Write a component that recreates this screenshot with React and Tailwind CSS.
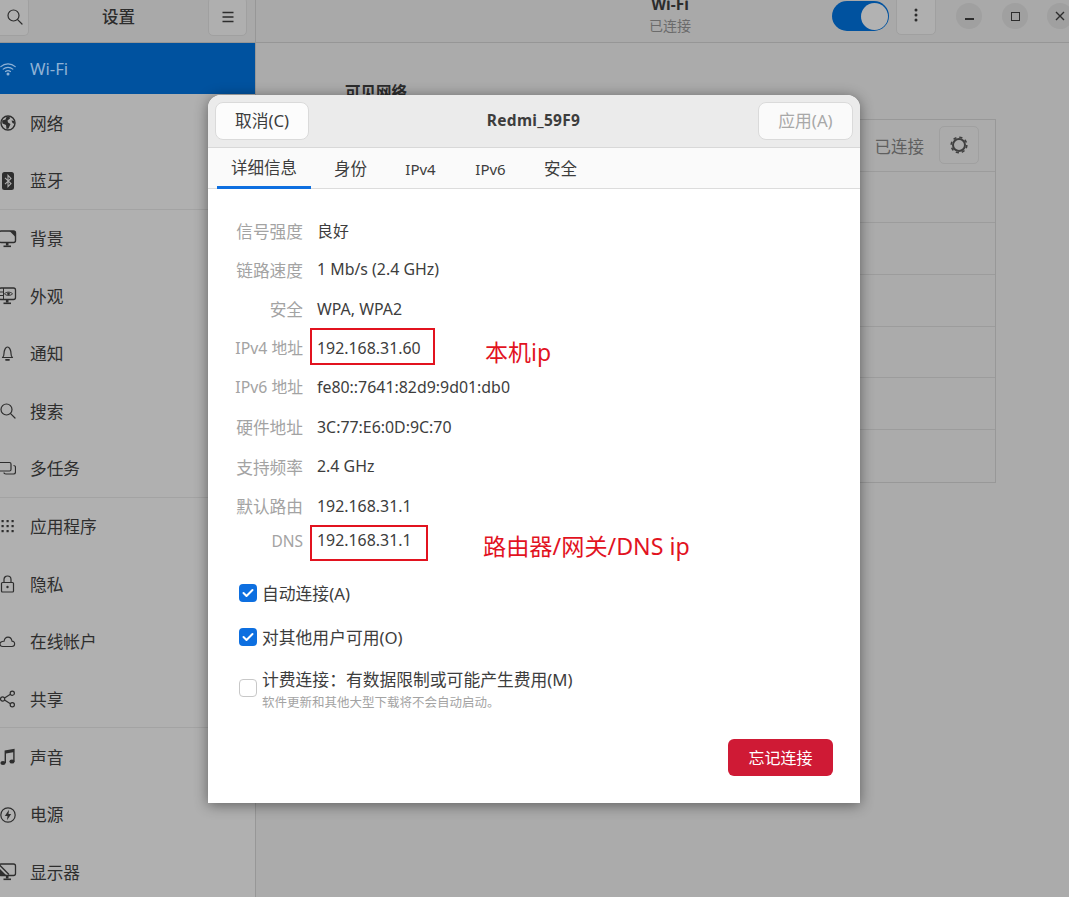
const cjk = "font-['Noto_Sans','Noto_Sans_CJK_SC',sans-serif]";

const Wifi = () => (
  <svg width="16" height="16" viewBox="0 0 16 16" fill="none" stroke="currentColor" strokeWidth="1.2" strokeLinecap="round">
    <path d="M0.8 5.6C4.8 1.9 11.2 1.9 15.2 5.6" />
    <path d="M3.2 8.1C5.9 5.7 10.1 5.7 12.8 8.1" />
    <path d="M5.5 10.5C6.9 9.4 9.1 9.4 10.5 10.5" />
    <circle cx="8" cy="13" r="1.5" fill="currentColor" stroke="none" />
  </svg>
);
const Globe = () => (
  <svg width="16" height="16" viewBox="0 0 16 16" fill="none">
    <circle cx="8" cy="8" r="7" stroke="currentColor" strokeWidth="1.4" />
    <path d="M2 5.5L5.5 4.5L6.5 2L9.5 1.5L10 3.5L7.5 5.5L8 7.5L10.5 9L8.5 13.5L6.5 14L6 10L2.5 8.5Z" fill="currentColor" />
    <path d="M11.5 5.5L14.5 6L14.5 9L12.5 8Z" fill="currentColor" />
  </svg>
);
const Bluetooth = () => (
  <svg width="16" height="18" viewBox="0 0 16 18">
    <rect x="2" y="0" width="12" height="18" rx="2.5" fill="currentColor" />
    <path d="M5 5.8L11 11.6L8 14.6V3.4L11 6.4L5 12.2" fill="none" stroke="#b0b0b0" strokeWidth="1.1" />
  </svg>
);
const Background = () => (
  <svg width="16" height="18" viewBox="0 0 16 18" fill="none" stroke="currentColor" strokeWidth="1.4" className="overflow-visible">
    <rect x="-1" y="1" width="16.5" height="11.5" rx="2" />
    <path d="M9.5 1L15.5 7V3Q15.5 1 13.5 1Z" fill="currentColor" stroke="none" />
    <path d="M7.2 13V15.5" strokeWidth="2.6" />
    <path d="M3.5 16.3H11" strokeWidth="1.6" />
  </svg>
);
const Appearance = () => (
  <svg width="16" height="18" viewBox="0 0 16 18" fill="none" stroke="currentColor" strokeWidth="1.3" className="overflow-visible">
    <rect x="-1" y="1" width="16.5" height="11.5" rx="2" />
    <path d="M3.5 1V12.5" strokeWidth="1" />
    <path d="M-1 5H3.5M-1 8.5H3.5" strokeWidth="1" />
    <path d="M4.5 6.8C6.5 4.6 10.5 4.6 12.5 6.8C10.5 9 6.5 9 4.5 6.8Z" strokeWidth="1" />
    <circle cx="8.5" cy="6.8" r="1.4" fill="currentColor" stroke="none" />
    <path d="M7.2 13V15.5" strokeWidth="2.6" />
    <path d="M3.5 16.3H11" strokeWidth="1.6" />
  </svg>
);
const Bell = () => (
  <svg width="16" height="16" viewBox="0 0 16 16" fill="none" stroke="currentColor" strokeWidth="1.2">
    <path d="M2.5 11.5C3.8 10.6 4 9.5 4 7.5C4 4.5 5.5 1 7.5 1C9.5 1 11 4.5 11 7.5C11 9.5 11.2 10.6 12.5 11.5Z" strokeLinejoin="round" />
    <path d="M6 13.8H9" strokeWidth="1.8" strokeLinecap="round" />
  </svg>
);
const Search = ({ size = 16 }) => (
  <svg width={size} height={size} viewBox="0 0 16 16" fill="none" stroke="currentColor" strokeWidth="1.2" strokeLinecap="round">
    <circle cx="6.5" cy="6.5" r="5.5" />
    <path d="M10.6 10.6L15 15" />
  </svg>
);
const Multitask = () => (
  <svg width="16" height="16" viewBox="0 0 16 16" fill="none" stroke="currentColor" strokeWidth="1.2">
    <path d="M0 1.5H9.5Q11 1.5 11 3V8.5Q11 10 9.5 10H0" />
    <path d="M13.5 4.5Q15.5 4.5 15.5 6.5V11Q15.5 13 13.5 13H6Q4 13 4 11.5" />
  </svg>
);
const Grid = () => (
  <svg width="16" height="16" viewBox="0 0 16 16" fill="currentColor">
    {[1, 6, 11].flatMap((y) =>
      [1.5, 6.5, 11.5].map((x) => <rect key={`${x}-${y}`} x={x} y={y} width="2.2" height="2.2" />)
    )}
  </svg>
);
const Lock = () => (
  <svg width="16" height="18" viewBox="0 0 16 18" fill="none" stroke="currentColor" strokeWidth="1.2">
    <rect x="1.5" y="7.5" width="12" height="9.5" rx="1" />
    <path d="M4 7.5V4.5C4 2.5 5.5 1 7.5 1C9.5 1 11 2.5 11 4.5V7.5" />
    <circle cx="7.5" cy="12" r="1.2" fill="currentColor" stroke="none" />
  </svg>
);
const Cloud = () => (
  <svg width="18" height="16" viewBox="0 0 18 16" fill="none" stroke="currentColor" strokeWidth="1.2">
    <path d="M3 13H13.5C15.5 13 16.5 11.6 16.5 10C16.5 8.4 15.2 7 13.5 7C13 4.2 11.2 2.5 9 2.5C6.6 2.5 5 4.5 4.6 7.2C1.8 7 0 8.4 0 10.2C0 11.8 1.2 13 3 13Z" />
  </svg>
);
const Share = () => (
  <svg width="16" height="18" viewBox="0 0 16 18" fill="none" stroke="currentColor" strokeWidth="1.2">
    <circle cx="2.6" cy="9" r="2.1" />
    <circle cx="12.3" cy="3.2" r="2.1" />
    <circle cx="12.3" cy="14.8" r="2.1" />
    <path d="M4.5 8L10.4 4.3M4.5 10L10.4 13.7" />
  </svg>
);
const Music = () => (
  <svg width="16" height="18" viewBox="0 0 16 18" fill="currentColor">
    <ellipse cx="3" cy="15" rx="2.6" ry="2.1" />
    <ellipse cx="12" cy="13.5" rx="2.6" ry="2.1" />
    <path d="M4.6 15V2.5L14.6 0.8V13.5H13.2V4.2L6 5.4V15Z" />
  </svg>
);
const Power = () => (
  <svg width="16" height="16" viewBox="0 0 16 16" fill="none">
    <circle cx="8" cy="8" r="7.2" stroke="currentColor" strokeWidth="1.2" />
    <path d="M9 2.8L4.8 9H7.5L7 13.2L11.2 7H8.5Z" fill="currentColor" />
  </svg>
);
const Display = () => (
  <svg width="16" height="18" viewBox="0 0 16 18" fill="none" stroke="currentColor" strokeWidth="1.3" className="overflow-visible">
    <rect x="-1" y="1" width="16.5" height="11.5" rx="2" />
    <path d="M-1 1.5L9 11.5" />
    <path d="M0 6L6 12H0Z" fill="currentColor" stroke="none" />
    <path d="M7.2 13V15.5" strokeWidth="2.6" />
    <path d="M3.5 16.3H11" strokeWidth="1.6" />
  </svg>
);
const Menu = () => (
  <svg width="12" height="12" viewBox="0 0 12 12" stroke="currentColor" strokeWidth="1.3">
    <path d="M0.5 1.5H11.5M0.5 6H11.5M0.5 10.5H11.5" />
  </svg>
);
const Gear = () => (
  <svg width="20" height="20" viewBox="0 0 20 20" fill="none" stroke="currentColor">
    <circle cx="10" cy="10" r="7.8" strokeWidth="1.6" strokeDasharray="3.2 2.93" />
    <circle cx="10" cy="10" r="6" strokeWidth="2" />
  </svg>
);
const Check = () => (
  <svg width="12" height="10" viewBox="0 0 12 10" fill="none" stroke="white" strokeWidth="2" strokeLinecap="round" strokeLinejoin="round">
    <path d="M1.5 5L4.5 8L10.5 2" />
  </svg>
);

const sections = [
  [
    { name: "Wi-Fi", icon: Wifi, active: true },
    { name: "网络", icon: Globe },
    { name: "蓝牙", icon: Bluetooth },
  ],
  [
    { name: "背景", icon: Background },
    { name: "外观", icon: Appearance },
    { name: "通知", icon: Bell },
    { name: "搜索", icon: Search },
    { name: "多任务", icon: Multitask },
  ],
  [
    { name: "应用程序", icon: Grid },
    { name: "隐私", icon: Lock },
    { name: "在线帐户", icon: Cloud },
    { name: "共享", icon: Share },
  ],
  [
    { name: "声音", icon: Music },
    { name: "电源", icon: Power },
    { name: "显示器", icon: Display },
  ],
];

const details = [
  ["信号强度", "良好"],
  ["链路速度", "1 Mb/s (2.4 GHz)"],
  ["安全", "WPA, WPA2"],
  ["IPv4 地址", "192.168.31.60"],
  ["IPv6 地址", "fe80::7641:82d9:9d01:db0"],
  ["硬件地址", "3C:77:E6:0D:9C:70"],
  ["支持频率", "2.4 GHz"],
  ["默认路由", "192.168.31.1"],
];

const tabs = ["详细信息", "身份", "IPv4", "IPv6", "安全"];

function Sidebar() {
  return (
    <aside className="w-[256px] shrink-0 flex flex-col border-r border-[#979797] bg-[#b0b0b0]">
      <header className="h-[43px] shrink-0 flex items-center justify-between border-b border-[#969696] bg-[#a9a9a9] pr-[8px]">
        <div className="w-[29px] h-[39px] -mt-[9px] flex items-center justify-end pr-[5px] rounded-r-[5px] border border-l-0 border-[#a0a0a0] bg-[#afafaf] text-[#2d2d2d]">
          <Search />
        </div>
        <span className="text-[16.5px] font-medium text-[#2c2c2c] -mt-[8px]">设置</span>
        <div className="w-[39px] h-[39px] -mt-[9px] flex items-center justify-center rounded-[5px] border border-[#a0a0a0] bg-[#afafaf] text-[#2d2d2d]">
          <Menu />
        </div>
      </header>
      {sections.map((items, i) => (
        <div key={i} className={i > 0 ? "border-t border-[#a3a3a3]" : ""}>
          {items.map(({ name, icon: Icon, active }) => (
            <div
              key={name}
              className={`flex items-center gap-[14px] text-[16.7px] ${
                active ? "h-[51px] bg-[#00529f] text-[#8fb2d6]" : "h-[57.4px] pt-[1px] text-[#2e2e2e]"
              }`}
            >
              <span className="w-[16px] flex justify-center">
                <Icon />
              </span>
              <span>{name}</span>
            </div>
          ))}
        </div>
      ))}
    </aside>
  );
}

function TopBar() {
  return (
    <header className="h-[43px] shrink-0 border-b border-[#969696] bg-[#a9a9a9] relative">
      <div className="absolute left-[374px] top-[-6px] w-[80px] text-center leading-[20px]">
        <div className="text-[15.5px] font-bold text-[#2c2c2c]">Wi-Fi</div>
        <div className="text-[14px] text-[#6b6b6b] mt-[2px]">已连接</div>
      </div>
      <div className="absolute left-[576px] top-[1px] w-[57px] h-[30px] rounded-full bg-[#00529f] flex justify-end items-center pr-[1px]">
        <span className="w-[27px] h-[27px] rounded-full bg-[#b2b2b2]" />
      </div>
      <div className="absolute left-[640px] top-[-6px] w-[40px] h-[41px] rounded-[5px] border border-[#a0a0a0] bg-[#afafaf] flex items-center justify-center text-[#2d2d2d]">
        <svg width="4" height="14" viewBox="0 0 4 14" fill="currentColor">
          <circle cx="2" cy="2" r="1.5" />
          <circle cx="2" cy="7" r="1.5" />
          <circle cx="2" cy="12" r="1.5" />
        </svg>
      </div>
      <div className="absolute left-[700px] top-[3px] w-[26px] h-[26px] rounded-full bg-[#a0a0a0] flex items-center justify-center">
        <span className="w-[9px] h-[1.5px] bg-[#2d2d2d] mt-[6px]" />
      </div>
      <div className="absolute left-[746px] top-[3px] w-[26px] h-[26px] rounded-full bg-[#a0a0a0] flex items-center justify-center">
        <span className="w-[9px] h-[9px] border-[1.5px] border-[#2d2d2d]" />
      </div>
      <div className="absolute left-[791px] top-[3px] w-[26px] h-[26px] rounded-full bg-[#a0a0a0] flex items-center justify-center text-[#2d2d2d]">
        <svg width="10" height="10" viewBox="0 0 10 10" stroke="currentColor" strokeWidth="1.4">
          <path d="M1 1L9 9M9 1L1 9" />
        </svg>
      </div>
    </header>
  );
}

function Networks() {
  return (
    <main className="flex-1 bg-[#ababab] pl-[89px] pt-[38px]">
      <h2 className="text-[15.5px] font-bold text-[#2c2c2c] leading-[22px] mb-[16px]">可见网络</h2>
      <div className="w-[651px] border border-[#989898] flex flex-col">
        <div className="h-[51.7px] flex items-center justify-end gap-[13px] pr-[16px] border-b border-[#9c9c9c]">
          <span className="text-[16.5px] text-[#5f5f5f] pt-[4px] mr-[2px]">已连接</span>
          <div className="w-[40px] h-[38px] rounded-[5px] border border-[#a0a0a0] flex items-center justify-center text-[#404040]">
            <Gear />
          </div>
        </div>
        {[0, 1, 2, 3, 4, 5].map((i) => (
          <div key={i} className="h-[51.7px] border-b border-[#9c9c9c] last:border-b-0" />
        ))}
      </div>
    </main>
  );
}

function CheckRow({ checked, children, boxClass = "" }) {
  return (
    <div className="flex items-center gap-[5px]">
      <span
        className={`w-[18px] h-[18px] shrink-0 rounded-[4px] flex items-center justify-center ${boxClass} ${
          checked ? "bg-[#0d6fe0]" : "border border-[#c8c8c8] bg-white"
        }`}
      >
        {checked && <Check />}
      </span>
      {children}
    </div>
  );
}

function Dialog() {
  return (
    <section className="absolute left-[208px] top-[95px] w-[652px] h-[708px] rounded-t-[13px] bg-white flex flex-col overflow-hidden shadow-[0_2px_14px_rgba(0,0,0,0.45)]">
      <header className="h-[53px] shrink-0 bg-[#ebebeb] border-b border-[#d8d8d8] flex items-center justify-between px-[7px]">
        <button className="w-[94px] h-[38px] rounded-[8px] border border-[#dadada] bg-[#fcfcfc] text-[16.8px] text-[#3d3d3d]">
          取消(C)
        </button>
        <span className="text-[15.5px] font-bold text-[#3d3d3d] tracking-[0.3px]">Redmi_59F9</span>
        <button className="w-[95px] h-[38px] rounded-[8px] border border-[#dadada] bg-[#fafafa] text-[16.8px] text-[#a8a8a8]">
          应用(A)
        </button>
      </header>
      <nav className="h-[41px] shrink-0 bg-[#fafafa] border-b border-[#dcdcdc] flex gap-[9px] pl-[9px]">
        {tabs.map((tab, i) => (
          <div
            key={tab}
            className={`h-[41px] px-[14px] flex items-center text-[#3d3d3d] ${
              i === 0 ? "border-b-[3px] border-[#0d6fe0] pt-[3px]" : "pt-[2px]"
            } ${tab.startsWith("IPv") ? "text-[15px] w-[61px] justify-center" : "text-[16.5px]"}`}
          >
            {tab}
          </div>
        ))}
      </nav>
      <div className="flex-1 flex flex-col pt-[22px]">
        {details.map(([label, value], i) => (
          <div
            key={label}
            className={`h-[39.4px] grid grid-cols-[95px_1fr] gap-x-[14px] items-center ${i === 0 ? "pt-[2px]" : ""}`}
          >
            <span className={`text-right text-[#a3a3a3] ${label.startsWith("IPv") ? "text-[15.8px]" : "text-[16.7px]"}`}>
              {label}
            </span>
            <span className="text-[15.9px] text-[#3d3d3d]">{value}</span>
          </div>
        ))}
        <div className="h-[30px] grid grid-cols-[95px_1fr] gap-x-[14px] items-center">
          <span className="text-right text-[15.5px] text-[#a3a3a3]">DNS</span>
          <span className="text-[15.9px] text-[#3d3d3d]">192.168.31.1</span>
        </div>
        <div className="pl-[31px] mt-[15px] flex flex-col">
          <div className="h-[44px] flex items-center">
            <CheckRow checked>
              <span className="text-[16.8px] text-[#3d3d3d]">自动连接(A)</span>
            </CheckRow>
          </div>
          <div className="h-[44px] flex items-center">
            <CheckRow checked>
              <span className="text-[16.8px] text-[#3d3d3d]">对其他用户可用(O)</span>
            </CheckRow>
          </div>
          <div className="mt-[9px]">
            <CheckRow boxClass="-mt-[4px]">
              <div className="flex flex-col">
                <span className="text-[16.8px] leading-[24px] text-[#3d3d3d]">计费连接：有数据限制或可能产生费用(M)</span>
                <span className="text-[12.5px] leading-[18px] mt-[2px] text-[#a3a3a3]">软件更新和其他大型下载将不会自动启动。</span>
              </div>
            </CheckRow>
          </div>
        </div>
        <div className="mt-auto flex justify-end pr-[27px] pb-[27px]">
          <button className="w-[105px] h-[37px] rounded-[6px] bg-[#cf1a35] text-white text-[16px]">忘记连接</button>
        </div>
      </div>
      <div className="absolute left-[102px] top-[233px] w-[125px] h-[37px] border-2 border-[#e2131f]" />
      <div className="absolute left-[102px] top-[430px] w-[118px] h-[36px] border-2 border-[#e2131f]" />
      <span className="absolute left-[277px] top-[240px] text-[23px] leading-[34px] text-[#e2131f]">本机ip</span>
      <span className="absolute left-[275px] top-[434px] text-[23.2px] leading-[34px] text-[#e2131f]">路由器/网关/DNS ip</span>
    </section>
  );
}

export default function App() {
  return (
    <div className={`relative w-[1069px] h-[897px] overflow-hidden flex bg-[#ababab] ${cjk}`}>
      <Sidebar />
      <div className="flex-1 flex flex-col">
        <TopBar />
        <Networks />
      </div>
      <Dialog />
    </div>
  );
}
